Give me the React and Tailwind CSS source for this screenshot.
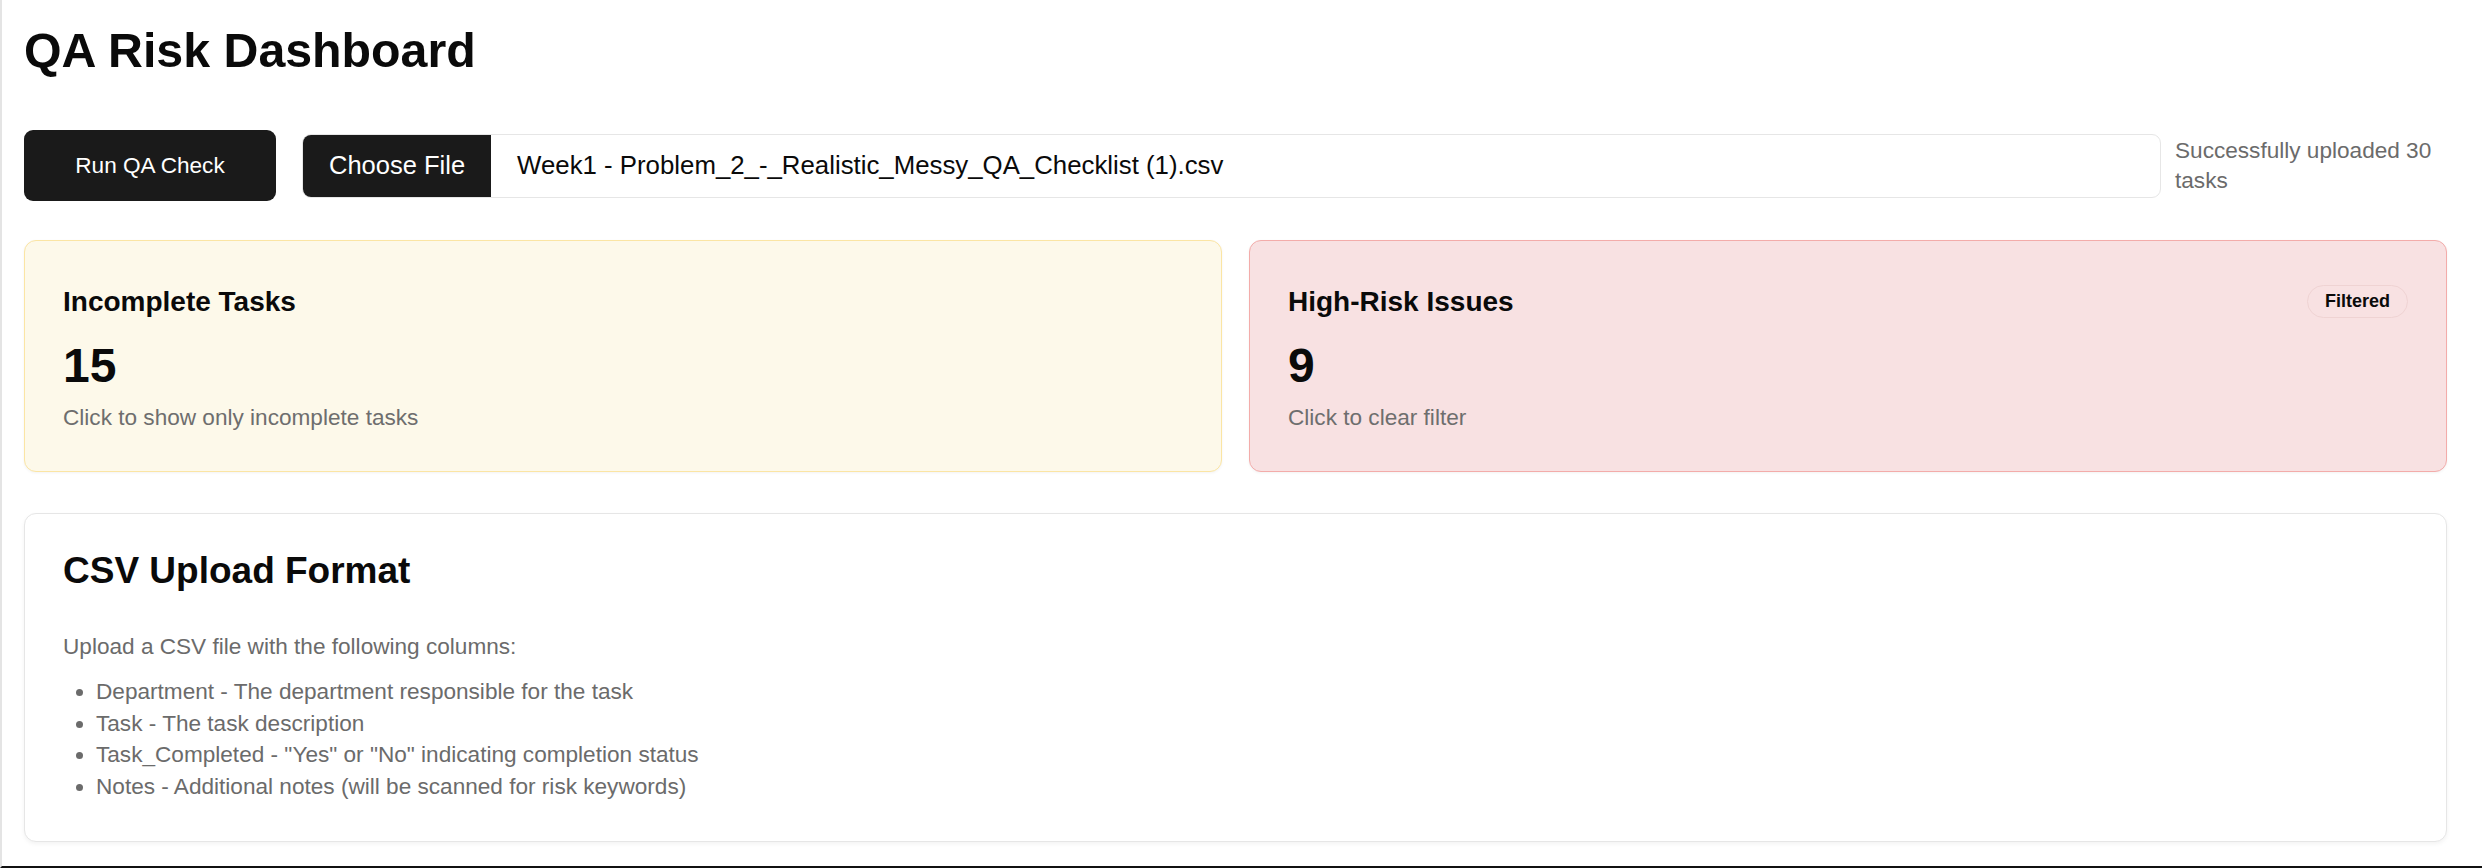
import React from 'react';

const font = { fontFamily: '"Liberation Sans", Arial, sans-serif' };

const StatCard = ({ title, value, hint, tone, badge }) => (
  <div
    className={`rounded-[12px] border pt-[44.5px] pb-[41.5px] px-[38px] shadow-[0_1px_3px_rgba(0,0,0,0.05)] cursor-pointer ${
      tone === 'yellow'
        ? 'bg-[#fdf9ea] border-[#fbe5a4]'
        : 'bg-[#f8e1e2] border-[#f3acaa]'
    }`}
  >
    <div className="h-[32px] flex items-center justify-between">
      <h3 className="text-[28px] leading-[32px] font-bold text-[#0a0a0a]">{title}</h3>
      {badge && (
        <span className="px-[17px] py-[5px] rounded-full border border-[#efd3d3] text-[18px] leading-[21px] font-bold text-[#0a0a0a]">
          {badge}
        </span>
      )}
    </div>
    <p className="mt-[20px] text-[48px] leading-[55px] font-bold text-[#0a0a0a]">{value}</p>
    <p className="mt-[13px] text-[22.6px] leading-[24px] text-[#6e6e6e]">{hint}</p>
  </div>
);

export default function App() {
  return (
    <div
      className="h-[868px] overflow-hidden bg-white border-l-2 border-l-[#e4e4e4] border-b-2 border-b-[#111] pl-[22px] pr-[35px] pt-[23px]"
      style={font}
    >
      <h1 className="text-[48.3px] leading-[55px] font-bold text-[#0a0a0a]">QA Risk Dashboard</h1>

      {/* upload row */}
      <div className="mt-[52px] flex items-center">
        <button className="w-[252px] h-[71px] shrink-0 rounded-[9px] bg-[#1a1a1a] text-white text-[22.6px]">
          Run QA Check
        </button>
        <div className="ml-[26px] flex-1 h-[64px] flex items-center rounded-[9px] border border-[#e6e6e6] overflow-hidden">
          <span className="h-full flex items-center px-[26px] bg-[#1a1a1a] text-white text-[25.5px]">
            Choose File
          </span>
          <span className="ml-[26px] text-[25.8px] text-[#0a0a0a] whitespace-nowrap">
            Week1 - Problem_2_-_Realistic_Messy_QA_Checklist (1).csv
          </span>
        </div>
        <p className="ml-[14px] w-[272px] shrink-0 text-[22.6px] leading-[30px] text-[#6b6b6b]">
          Successfully uploaded 30 tasks
        </p>
      </div>

      {/* stat cards */}
      <div className="mt-[39px] grid grid-cols-2 gap-[27px]">
        <StatCard
          tone="yellow"
          title="Incomplete Tasks"
          value="15"
          hint="Click to show only incomplete tasks"
        />
        <StatCard
          tone="red"
          title="High-Risk Issues"
          value="9"
          hint="Click to clear filter"
          badge="Filtered"
        />
      </div>

      {/* format help */}
      <div className="mt-[41px] rounded-[12px] border border-[#e6e6e6] bg-white pt-[36px] pb-[39px] px-[38px] shadow-[0_2px_4px_rgba(0,0,0,0.05)]">
        <h2 className="text-[37px] leading-[41px] font-bold text-[#0a0a0a]">CSV Upload Format</h2>
        <p className="mt-[39.5px] text-[22.6px] leading-[31.5px] text-[#6b6b6b]">
          Upload a CSV file with the following columns:
        </p>
        <ul className="mt-[14px] list-disc pl-[33px] text-[22.6px] leading-[31.5px] text-[#6b6b6b]">
          <li>Department - The department responsible for the task</li>
          <li>Task - The task description</li>
          <li>Task_Completed - "Yes" or "No" indicating completion status</li>
          <li>Notes - Additional notes (will be scanned for risk keywords)</li>
        </ul>
      </div>
    </div>
  );
}
